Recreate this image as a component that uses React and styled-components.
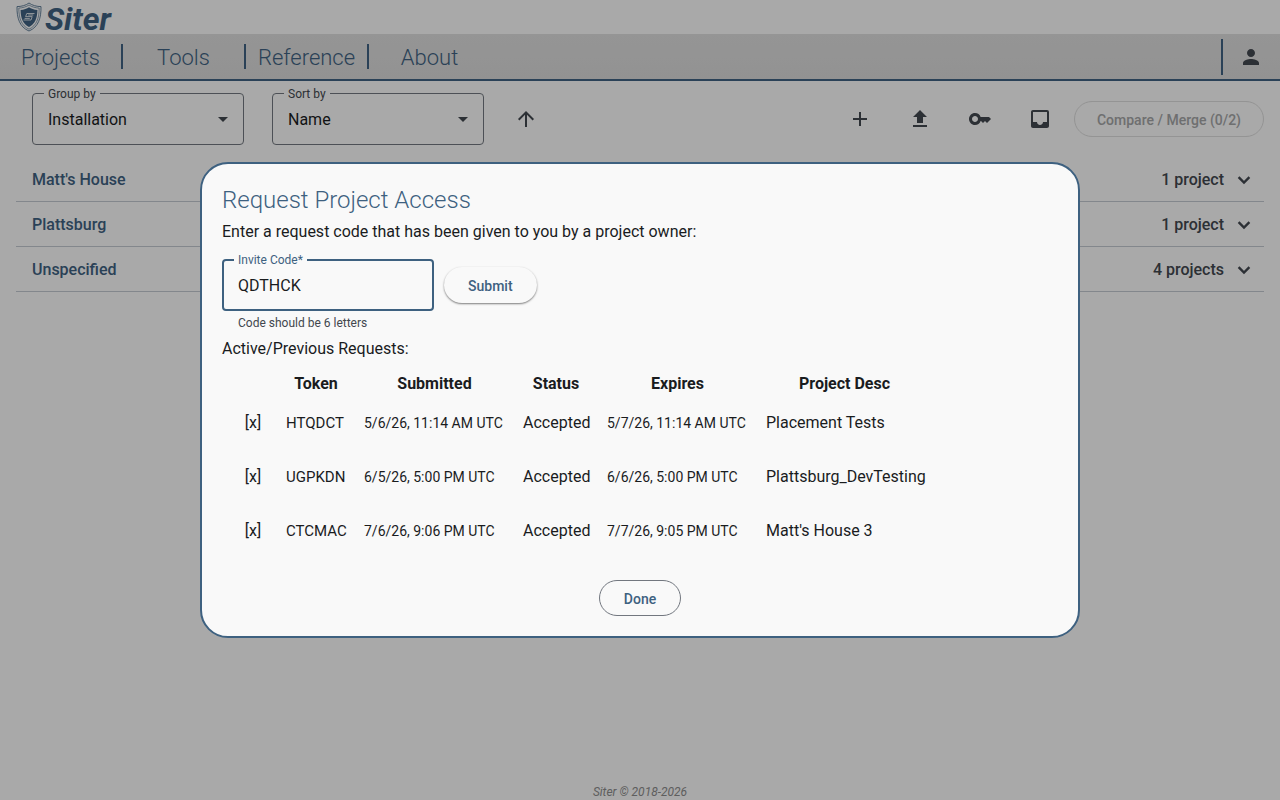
import React, { useState } from "react";
import styled, { createGlobalStyle } from "styled-components";
import {
  MdAdd,
  MdArrowDropDown,
  MdArrowUpward,
  MdInbox,
  MdKey,
  MdPerson,
  MdUpload,
} from "react-icons/md";

const navItems = ["Projects", "Tools", "Reference", "About"];

const groups = [
  { name: "Matt's House", count: "1 project" },
  { name: "Plattsburg", count: "1 project" },
  { name: "Unspecified", count: "4 projects" },
];

const requests = [
  { token: "HTQDCT", submitted: "5/6/26, 11:14 AM UTC", status: "Accepted", expires: "5/7/26, 11:14 AM UTC", desc: "Placement Tests" },
  { token: "UGPKDN", submitted: "6/5/26, 5:00 PM UTC", status: "Accepted", expires: "6/6/26, 5:00 PM UTC", desc: "Plattsburg_DevTesting" },
  { token: "CTCMAC", submitted: "7/6/26, 9:06 PM UTC", status: "Accepted", expires: "7/7/26, 9:05 PM UTC", desc: "Matt's House 3" },
];

const Logo = () => (
  <svg width="26" height="30" viewBox="0 0 26 30" fill="none" aria-hidden="true">
    <path d="M13 1C10 3.400 5 4.600 1 4.600C.8 16 3.500 25 13 29C22.500 25 25.200 16 25 4.600C21 4.600 16 3.400 13 1Z" stroke="#3e6180" strokeWidth=".8" />
    <path d="M13 3C10.500 4.800 6.500 5.900 2.800 6.100C2.800 16 5.300 23.700 13 27.200C20.700 23.700 23.200 16 23.200 6.100C19.500 5.900 15.500 4.800 13 3Z" stroke="#3e6180" strokeWidth=".6" />
    <path d="M13 5.200C11 6.700 7.800 7.700 4.600 7.900C4.700 16 7 22 13 25C19 22 21.300 16 21.400 7.900C18.200 7.700 15 6.700 13 5.200Z" fill="#3e6180" />
    <path d="M18.500 11.500H10.800L9.600 14.600H16.200L15 18H7.500M17.300 13H12.200M8.600 16.400H13.800" stroke="#f9f9f9" strokeWidth=".8" />
  </svg>
);

const Chevron = () => (
  <svg width="24" height="24" viewBox="0 0 24 24" fill="none" stroke="currentColor" strokeWidth="2.400" aria-hidden="true">
    <path d="M6.600 9.200L12 14.600L17.400 9.200" />
  </svg>
);

const Select = ({ id, label, options }) => (
  <Field>
    <FieldLabel htmlFor={id}>{label}</FieldLabel>
    <SelectBox id={id}>
      {options.map((option) => (
        <option key={option}>{option}</option>
      ))}
    </SelectBox>
    <Caret>
      <MdArrowDropDown size={24} />
    </Caret>
  </Field>
);

const RequestDialog = () => {
  const [code, setCode] = useState("QDTHCK");

  return (
    <Backdrop>
      <Dialog role="dialog" aria-modal="true" aria-labelledby="dialog-title">
        <Title id="dialog-title">Request Project Access</Title>
        <Text>Enter a request code that has been given to you by a project owner:</Text>
        <InviteForm onSubmit={(e) => e.preventDefault()}>
          <Field>
            <FieldLabel htmlFor="code" $active>Invite Code*</FieldLabel>
            <CodeInput id="code" value={code} onChange={(e) => setCode(e.target.value)} aria-describedby="code-hint" />
          </Field>
          <ElevatedButton type="submit">Submit</ElevatedButton>
        </InviteForm>
        <Hint id="code-hint">Code should be 6 letters</Hint>
        <Text>Active/Previous Requests:</Text>
        <Table>
          <thead>
            <tr>
              <Th $width={52} />
              <Th $width={76}>Token</Th>
              <Th $width={157}>Submitted</Th>
              <Th $width={82}>Status</Th>
              <Th $width={157}>Expires</Th>
              <Th $width={173}>Project Desc</Th>
            </tr>
          </thead>
          <tbody>
            {requests.map((request) => (
              <tr key={request.token}>
                <ActionCell><RemoveButton type="button">[x]</RemoveButton></ActionCell>
                <Td $size={15}>{request.token}</Td>
                <Td $size={14}>{request.submitted}</Td>
                <Td>{request.status}</Td>
                <Td $size={14}>{request.expires}</Td>
                <Td>{request.desc}</Td>
              </tr>
            ))}
          </tbody>
        </Table>
        <Actions>
          <OutlinedButton type="button">Done</OutlinedButton>
        </Actions>
      </Dialog>
    </Backdrop>
  );
};

const App = () => (
  <>
    <GlobalStyle />
    <Page>
      <Header>
        <Logo />
        <Brand>Siter</Brand>
      </Header>
      <Nav>
        {navItems.map((item) => (
          <NavLink key={item} href="#">{item}</NavLink>
        ))}
        <Account>
          <IconButton aria-label="Account"><MdPerson size={24} /></IconButton>
        </Account>
      </Nav>
      <Toolbar>
        <Select id="group" label="Group by" options={["Installation", "None"]} />
        <Select id="sort" label="Sort by" options={["Name", "Date"]} />
        <SortButton aria-label="Sort direction"><MdArrowUpward size={24} /></SortButton>
        <ToolGroup>
          <IconButton aria-label="New project"><MdAdd size={24} /></IconButton>
          <IconButton aria-label="Upload"><MdUpload size={24} /></IconButton>
          <IconButton aria-label="Request access"><MdKey size={24} /></IconButton>
          <IconButton aria-label="Inbox"><MdInbox size={24} /></IconButton>
        </ToolGroup>
        <CompareButton disabled>Compare / Merge (0/2)</CompareButton>
      </Toolbar>
      <GroupList>
        {groups.map((group) => (
          <GroupRow key={group.name}>
            <GroupName>{group.name}</GroupName>
            <span>{group.count}</span>
            <Chevron />
          </GroupRow>
        ))}
      </GroupList>
      <Footer>Siter © 2018-2026</Footer>
    </Page>
    <RequestDialog />
  </>
);

const GlobalStyle = createGlobalStyle`
  * {
    box-sizing: border-box;
  }

  body {
    margin: 0;
    background: #f9f9f9;
    color: #1a1c1e;
    font-family: Roboto, "Open Sans", sans-serif;
    font-size: 16px;
    line-height: 24px;
  }

  button, input, select {
    font: inherit;
    color: inherit;
  }
`;

const Page = styled.div`
  display: flex;
  flex-direction: column;
  min-height: 100vh;
`;

const Header = styled.header`
  display: flex;
  align-items: center;
  gap: 3px;
  height: 34px;
  padding: 0 16px;
`;

const Brand = styled.span`
  padding-top: 4px;
  color: #3e6180;
  font-size: 32px;
  font-style: italic;
  font-weight: 700;
  line-height: 32px;
`;

const Nav = styled.nav`
  display: flex;
  align-items: center;
  height: 47px;
  border-bottom: 2px solid #3e6180;
  background: linear-gradient(#dcdcdc, #d8d8d8);
`;

const NavLink = styled.a`
  width: 123px;
  height: 25px;
  border-right: 2px solid #3e6180;
  color: #3e6180;
  font-size: 22px;
  font-weight: 300;
  line-height: 27px;
  text-align: center;
  text-decoration: none;

  &:nth-of-type(4) {
    border-color: transparent;
  }
`;

const Account = styled.div`
  display: flex;
  align-items: center;
  height: 36px;
  margin-left: auto;
  padding: 0 5px 0 4px;
  border-left: 2px solid #3e6180;
`;

const Toolbar = styled.div`
  display: flex;
  align-items: center;
  padding: 12px 16px 12px 32px;
`;

const Field = styled.div`
  position: relative;
  width: 212px;

  & + & {
    margin-left: 28px;
  }
`;

const FieldLabel = styled.label`
  position: absolute;
  top: -7px;
  left: 12px;
  padding: 0 4px;
  background: #f9f9f9;
  color: ${({ $active }) => ($active ? "#3e6180" : "#42474e")};
  font-size: 12px;
  line-height: 16px;
`;

const SelectBox = styled.select`
  display: block;
  width: 100%;
  height: 52px;
  padding: 2px 40px 0 15px;
  border: 1px solid #72777f;
  border-radius: 4px;
  appearance: none;
  background: transparent;
`;

const Caret = styled.span`
  position: absolute;
  top: 14px;
  right: 9px;
  display: flex;
  color: #42474e;
  pointer-events: none;
`;

const CodeInput = styled.input`
  display: block;
  width: 100%;
  height: 52px;
  padding: 0 14px;
  border: 2px solid #3e6180;
  border-radius: 4px;
  outline: none;
  background: transparent;
`;

const IconButton = styled.button`
  display: flex;
  align-items: center;
  justify-content: center;
  width: 48px;
  height: 48px;
  padding: 0;
  border: 0;
  background: transparent;
  color: #42474e;
`;

const SortButton = styled(IconButton)`
  margin-left: 18px;
`;

const ToolGroup = styled.div`
  display: flex;
  gap: 12px;
  margin-right: 10px;
  margin-left: auto;
`;

const PillButton = styled.button`
  height: 36px;
  padding: 2px 24px 0;
  border-radius: 18px;
  background: #f9f9f9;
  color: #3e6180;
  font-size: 14px;
  font-weight: 500;
  line-height: 20px;
`;

const ElevatedButton = styled(PillButton)`
  border: 0;
  box-shadow: 0 1px 2px rgba(0, 0, 0, 0.5);
`;

const OutlinedButton = styled(PillButton)`
  border: 1px solid #72777f;
`;

const CompareButton = styled(OutlinedButton)`
  padding: 2px 22px 0;

  &:disabled {
    border-color: #dadada;
    color: #a3a4a5;
  }
`;

const GroupList = styled.ul`
  margin: 0;
  padding: 0 16px;
  list-style: none;
`;

const GroupRow = styled.li`
  display: flex;
  align-items: center;
  gap: 8px;
  height: 45px;
  padding: 2px 8px 0 16px;
  border-bottom: 1px solid #c2c7cf;
  color: #42474e;
  font-weight: 500;
`;

const GroupName = styled.span`
  flex: 1;
  color: #3e6180;
`;

const Footer = styled.footer`
  margin-top: auto;
  color: #8b8b8b;
  font-size: 12px;
  font-style: italic;
  line-height: 16px;
  text-align: center;
`;

const Backdrop = styled.div`
  position: fixed;
  inset: 0;
  display: flex;
  align-items: center;
  justify-content: center;
  background: rgba(0, 0, 0, 0.32);
`;

const Dialog = styled.section`
  width: 880px;
  max-width: 80vw;
  padding: 20px;
  border: 2px solid #3e6180;
  border-radius: 28px;
  background: #f9f9f9;
`;

const Title = styled.h2`
  margin: 0 0 4px;
  color: #3e6180;
  font-size: 24px;
  font-weight: 300;
  line-height: 32px;
`;

const Text = styled.p`
  margin: 0;
`;

const InviteForm = styled.form`
  display: flex;
  align-items: center;
  gap: 10px;
  padding-top: 15px;
`;

const Hint = styled.div`
  padding: 4px 16px 6px;
  font-size: 12px;
  line-height: 16px;
  color: #42474e;
`;

const Table = styled.table`
  width: 711px;
  margin-top: 10px;
  border-spacing: 2px;
  table-layout: fixed;
`;

const Th = styled.th`
  width: ${({ $width }) => $width}px;
  padding: 0 8px;
  font-weight: 700;
  line-height: 22px;
`;

const Td = styled.td`
  height: 52px;
  padding: 0 8px;
  font-size: ${({ $size = 16 }) => $size}px;
  white-space: nowrap;
`;

const ActionCell = styled(Td)`
  padding-left: 14px;
  text-align: center;
`;

const RemoveButton = styled.button`
  padding: 0;
  border: 0;
  background: transparent;
`;

const Actions = styled.div`
  display: flex;
  justify-content: center;
  padding-top: 21px;
`;

export default App;
